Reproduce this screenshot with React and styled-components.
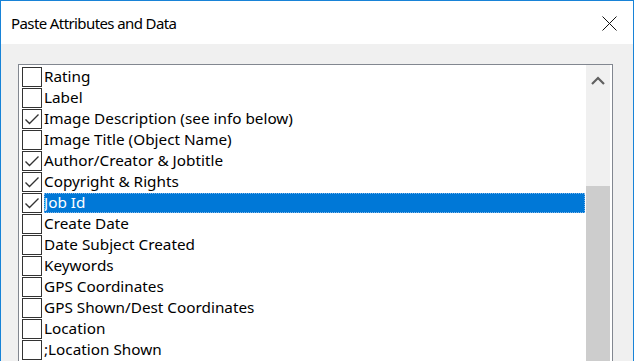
import React from "react";
import styled, { createGlobalStyle } from "styled-components";

const Global = createGlobalStyle`
  html, body { margin: 0; padding: 0; background: #f0f0f0; }
  body { font-family: "Noto Sans", "Segoe UI", sans-serif; }
  * { box-sizing: border-box; }
`;

const Window = styled.div`
  width: 634px;
  height: 361px;
  overflow: hidden;
  border: 1px solid #1883d7;
  border-bottom: none;
  background: #f0f0f0;
  display: flex;
  flex-direction: column;
`;

const TitleBar = styled.div`
  height: 43px;
  background: #ffffff;
  display: flex;
  align-items: center;
  justify-content: space-between;
  padding: 1px 16px 0 10px;
  flex-shrink: 0;
`;

const Title = styled.div`
  font-size: 15px;
  color: #000;
  letter-spacing: -0.6px;
`;

const CloseIcon = styled.svg`
  width: 15px;
  height: 15px;
  display: block;
`;

const Body = styled.div`
  flex: 1;
  padding: 20px 20px 0 17px;
  display: flex;
`;

const ListBox = styled.div`
  flex: 1;
  border: 1px solid #828790;
  border-bottom: none;
  background: #fff;
  display: flex;
  min-height: 0;
`;

const Items = styled.div`
  flex: 1;
  padding: 2px 1px 0 3px;
  display: flex;
  flex-direction: column;
`;

const Row = styled.div`
  height: 21px;
  display: flex;
  align-items: stretch;
  flex-shrink: 0;
`;

const Box = styled.div`
  width: 20px;
  height: 20px;
  border: 1px solid #333;
  background: #fff;
  flex-shrink: 0;
  display: flex;
  align-items: center;
  justify-content: center;
`;

const Label = styled.div`
  flex: 1;
  height: 20px;
  margin-left: 2px;
  font-size: 15.3px;
  line-height: 19px;
  white-space: nowrap;
  color: ${(p) => (p.$selected ? "#fff" : "#000")};
  background: ${(p) => (p.$selected ? "#0078d7" : "transparent")};
  outline: ${(p) => (p.$selected ? "1px dotted #7fb5e8" : "none")};
  outline-offset: -1px;
`;

const ScrollBar = styled.div`
  width: 24px;
  margin-right: 2px;
  background: #f0f0f0;
  display: flex;
  flex-direction: column;
  flex-shrink: 0;
`;

const ArrowBtn = styled.div`
  height: 25px;
  display: flex;
  align-items: center;
  justify-content: center;
  padding-top: 6px;
`;

const Track = styled.div`
  flex: 1;
  display: flex;
  flex-direction: column;
`;

const Thumb = styled.div`
  margin-top: 96px;
  flex: 1;
  background: #cdcdcd;
`;

const Check = () => (
  <svg width="16" height="14" viewBox="0 0 16 14">
    <path d="M1.5 7.5 L5.5 11.5 L14.5 2.5" fill="none" stroke="#333" strokeWidth="1.4" />
  </svg>
);

const items = [
  ["Rating", false],
  ["Label", false],
  ["Image Description (see info below)", true],
  ["Image Title (Object Name)", false],
  ["Author/Creator & Jobtitle", true],
  ["Copyright & Rights", true],
  ["Job Id", true, true],
  ["Create Date", false],
  ["Date Subject Created", false],
  ["Keywords", false],
  ["GPS Coordinates", false],
  ["GPS Shown/Dest Coordinates", false],
  ["Location", false],
  [";Location Shown", false],
];

export default function App() {
  return (
    <>
      <Global />
      <Window>
        <TitleBar>
          <Title>Paste Attributes and Data</Title>
          <CloseIcon viewBox="0 0 15 15">
            <path d="M0.5 0.5 L14.5 14.5 M14.5 0.5 L0.5 14.5" stroke="#111" strokeWidth="1" fill="none" />
          </CloseIcon>
        </TitleBar>
        <Body>
          <ListBox>
            <Items>
              {items.map(([text, checked, sel]) => (
                <Row key={text}>
                  <Box>{checked && <Check />}</Box>
                  <Label $selected={sel}>{text}</Label>
                </Row>
              ))}
            </Items>
            <ScrollBar>
              <ArrowBtn>
                <svg width="14" height="9" viewBox="0 0 14 9">
                  <path d="M1 8 L7 2 L13 8" fill="none" stroke="#606060" strokeWidth="2.2" />
                </svg>
              </ArrowBtn>
              <Track>
                <Thumb />
              </Track>
            </ScrollBar>
          </ListBox>
        </Body>
      </Window>
    </>
  );
}
